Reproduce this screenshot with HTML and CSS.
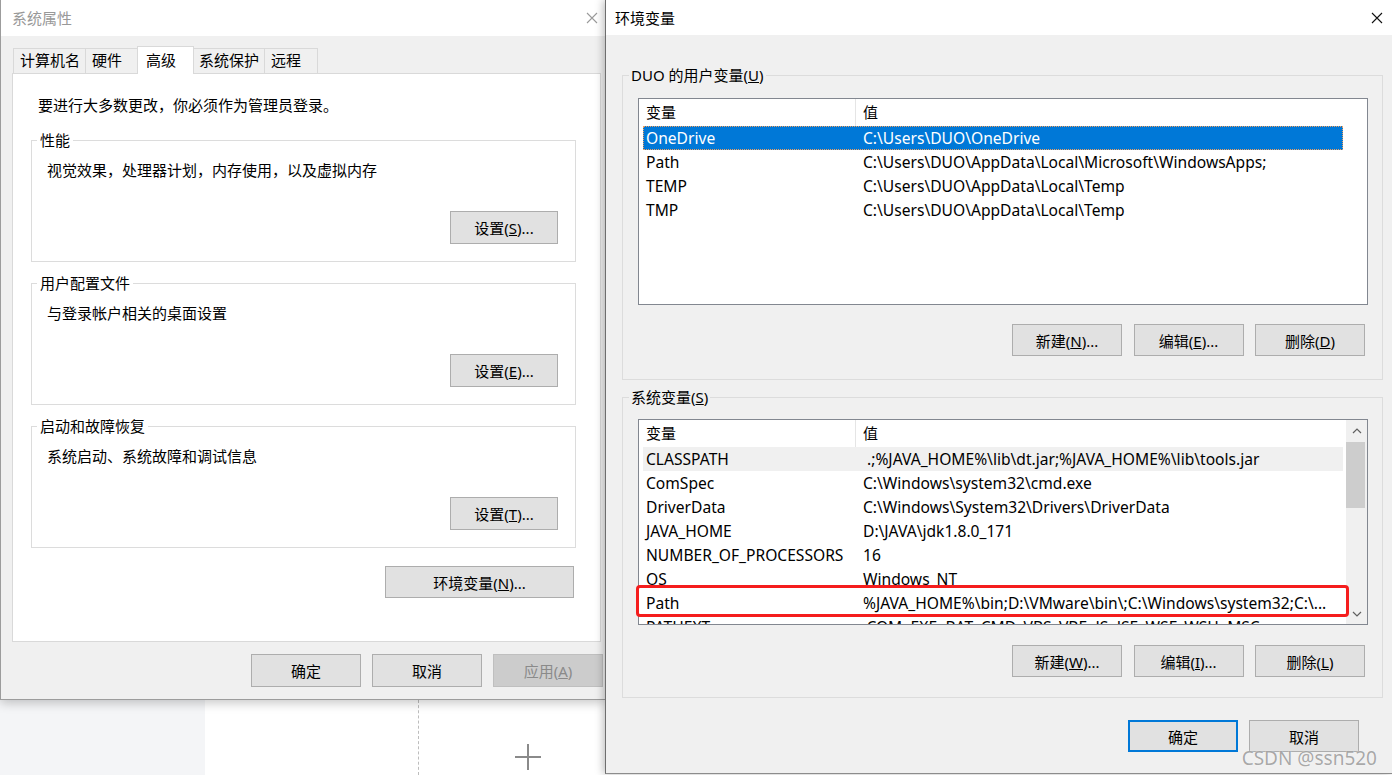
FILE: index.html
```html
<!DOCTYPE html>
<html lang="zh-CN">
<head>
    <meta charset="UTF-8">
    <meta name="viewport" content="width=device-width, initial-scale=1.0">
    <title>系统属性 - 环境变量</title>
    <link rel="stylesheet" href="styles.css">
</head>
<body>
    <div class="desktop">
        <div class="left-col">
            <!-- 系统属性 窗口 -->
            <div class="win sysprop">
                <div class="titlebar">
                    <span class="title inactive">系统属性</span>
                    <svg class="close" viewBox="0 0 12 12"><path d="M1 1L11 11M11 1L1 11" stroke="#9a9a9a" stroke-width="1.1" fill="none"/></svg>
                </div>
                <div class="win-body">
                    <div class="tabs">
                        <div class="tab">计算机名</div>
                        <div class="tab">硬件</div>
                        <div class="tab active">高级</div>
                        <div class="tab">系统保护</div>
                        <div class="tab">远程</div>
                    </div>
                    <div class="tab-panel">
                        <p class="note">要进行大多数更改，你必须作为管理员登录。</p>

                        <fieldset class="group">
                            <legend>性能</legend>
                            <div class="group-text">视觉效果，处理器计划，内存使用，以及虚拟内存</div>
                            <div class="group-actions"><button class="btn">设置(<u>S</u>)...</button></div>
                        </fieldset>

                        <fieldset class="group">
                            <legend>用户配置文件</legend>
                            <div class="group-text">与登录帐户相关的桌面设置</div>
                            <div class="group-actions"><button class="btn">设置(<u>E</u>)...</button></div>
                        </fieldset>

                        <fieldset class="group">
                            <legend>启动和故障恢复</legend>
                            <div class="group-text">系统启动、系统故障和调试信息</div>
                            <div class="group-actions"><button class="btn">设置(<u>T</u>)...</button></div>
                        </fieldset>

                        <div class="env-row"><button class="btn btn-wide">环境变量(<u>N</u>)...</button></div>
                    </div>
                    <div class="footer">
                        <button class="btn">确定</button>
                        <button class="btn">取消</button>
                        <button class="btn disabled">应用(<u>A</u>)</button>
                    </div>
                </div>
            </div>

            <!-- 窗口下面露出的页面 -->
            <div class="backdrop">
                <div class="bd-side"></div>
                <div class="bd-cell"></div>
                <div class="bd-cell add">
                    <svg viewBox="0 0 26 26"><path d="M13 0V26M0 13H26" stroke="#8a8a8a" stroke-width="2" fill="none"/></svg>
                </div>
            </div>
        </div>

        <!-- 环境变量 窗口 -->
        <div class="win envvars">
            <div class="titlebar">
                <span class="title">环境变量</span>
                <svg class="close" viewBox="0 0 12 12"><path d="M1 1L11 11M11 1L1 11" stroke="#111" stroke-width="1.1" fill="none"/></svg>
            </div>
            <div class="win-body env-body">
                <fieldset class="group env-group">
                    <legend>DUO 的用户变量(<u>U</u>)</legend>
                    <div class="listview user-list">
                        <div class="lv-rows">
                            <div class="lv-head"><span class="name">变量</span><span class="val">值</span></div>
                            <div class="lv-row selected"><span class="name">OneDrive</span><span class="val">C:\Users\DUO\OneDrive</span></div>
                            <div class="lv-row"><span class="name">Path</span><span class="val">C:\Users\DUO\AppData\Local\Microsoft\WindowsApps;</span></div>
                            <div class="lv-row"><span class="name">TEMP</span><span class="val">C:\Users\DUO\AppData\Local\Temp</span></div>
                            <div class="lv-row"><span class="name">TMP</span><span class="val">C:\Users\DUO\AppData\Local\Temp</span></div>
                        </div>
                    </div>
                    <div class="env-actions">
                        <button class="btn">新建(<u>N</u>)...</button>
                        <button class="btn">编辑(<u>E</u>)...</button>
                        <button class="btn">删除(<u>D</u>)</button>
                    </div>
                </fieldset>

                <fieldset class="group env-group sys">
                    <legend>系统变量(<u>S</u>)</legend>
                    <div class="lv-wrap">
                        <div class="listview sys-list">
                            <div class="lv-rows">
                                <div class="lv-head"><span class="name">变量</span><span class="val">值</span></div>
                                <div class="lv-row hot"><span class="name">CLASSPATH</span><span class="val">&nbsp;.;%JAVA_HOME%\lib\dt.jar;%JAVA_HOME%\lib\tools.jar</span></div>
                                <div class="lv-row"><span class="name">ComSpec</span><span class="val">C:\Windows\system32\cmd.exe</span></div>
                                <div class="lv-row"><span class="name">DriverData</span><span class="val">C:\Windows\System32\Drivers\DriverData</span></div>
                                <div class="lv-row"><span class="name">JAVA_HOME</span><span class="val">D:\JAVA\jdk1.8.0_171</span></div>
                                <div class="lv-row"><span class="name">NUMBER_OF_PROCESSORS</span><span class="val">16</span></div>
                                <div class="lv-row"><span class="name">OS</span><span class="val">Windows_NT</span></div>
                                <div class="lv-row"><span class="name">Path</span><span class="val">%JAVA_HOME%\bin;D:\VMware\bin\;C:\Windows\system32;C:\...</span></div>
                                <div class="lv-row"><span class="name">PATHEXT</span><span class="val">.COM;.EXE;.BAT;.CMD;.VBS;.VBE;.JS;.JSE;.WSF;.WSH;.MSC</span></div>
                            </div>
                            <div class="scrollbar">
                                <div class="sb-btn"><svg viewBox="0 0 10 6"><path d="M1 5L5 1L9 5" stroke="#606060" stroke-width="1.2" fill="none"/></svg></div>
                                <div class="sb-track"><div class="sb-thumb"></div></div>
                                <div class="sb-btn"><svg viewBox="0 0 10 6"><path d="M1 1L5 5L9 1" stroke="#606060" stroke-width="1.2" fill="none"/></svg></div>
                            </div>
                        </div>
                        <div class="mark"></div>
                    </div>
                    <div class="env-actions">
                        <button class="btn">新建(<u>W</u>)...</button>
                        <button class="btn">编辑(<u>I</u>)...</button>
                        <button class="btn">删除(<u>L</u>)</button>
                    </div>
                </fieldset>

                <div class="footer env-footer">
                    <button class="btn default">确定</button>
                    <button class="btn">取消</button>
                </div>
            </div>
            <div class="watermark">CSDN @ssn520</div>
        </div>
    </div>
</body>
</html>
```

FILE: styles.css
```css
* {
    box-sizing: border-box;
}

body {
    margin: 0;
    width: 1392px;
    height: 775px;
    overflow: hidden;
    font-family: "Noto Sans", "Noto Sans CJK SC", sans-serif;
    font-size: 15px;
    color: #000;
    background: #fff;
}

.desktop {
    display: flex;
    height: 775px;
}

.left-col {
    width: 605px;
    flex: none;
    display: flex;
    flex-direction: column;
}

/* 窗口通用 */
.win {
    background: #f0f0f0;
    display: flex;
    flex-direction: column;
}

.titlebar {
    flex: none;
    height: 36px;
    background: #fff;
    display: flex;
    align-items: center;
    justify-content: space-between;
    padding: 0 7px 0 11px;
}

.title {
    line-height: 20px;
}

.title.inactive {
    color: #999;
}

.close {
    width: 12px;
    height: 12px;
}

.btn {
    width: 108px;
    height: 33px;
    padding: 0;
    border: 1px solid #adadad;
    background: #e1e1e1;
    font-family: inherit;
    font-size: 15px;
    color: #000;
}

.btn.disabled {
    background: #cccccc;
    border-color: #bfbfbf;
    color: #8a8a8a;
}

.btn.default {
    border: 2px solid #0078d7;
}

/* 分组框 */
.group {
    margin: 0;
    border: 1px solid #dcdcdc;
    min-width: 0;
}

.group legend {
    padding: 0 3px;
    margin-left: -10px;
    line-height: 20px;
}

/* 系统属性 */
.sysprop {
    height: 700px;
    border-left: 1px solid #9c9c9c;
    border-bottom: 1px solid #9c9c9c;
    box-shadow: 0 3px 10px rgba(0, 0, 0, 0.22);
    position: relative;
    z-index: 1;
}

.sysprop .win-body {
    flex: 1;
    padding: 10px 0 0 11px;
}

.tabs {
    display: flex;
    align-items: flex-end;
    height: 28px;
    padding-left: 1px;
    margin-bottom: -1px;
    position: relative;
    z-index: 1;
}

.tab {
    height: 25px;
    line-height: 23px;
    min-width: 54px;
    padding: 0 5px 0 6px;
    margin: 0 -1px 1px 0;
    border: 1px solid #d9d9d9;
    border-bottom: none;
    background: #f0f0f0;
}

.tab.active {
    height: 28px;
    line-height: 26px;
    min-width: 57px;
    margin: 0 -2px 0 -1px;
    padding: 0 8px;
    background: #fff;
    position: relative;
    z-index: 1;
}

.tab-panel {
    width: 589px;
    height: 569px;
    background: #fff;
    border: 1px solid #d9d9d9;
    padding: 21px 24px 0 18px;
}

.note {
    margin: 0 0 15px;
    padding-left: 7px;
    line-height: 20px;
}

.tab-panel .group {
    padding: 10px 17px 17px 15px;
}

.tab-panel .group + .group {
    margin-top: 11px;
}

.group-text {
    line-height: 20px;
}

.group-actions {
    display: flex;
    justify-content: flex-end;
    margin-top: 31px;
}

.env-row {
    display: flex;
    justify-content: flex-end;
    margin-top: 18px;
    padding-right: 2px;
}

.btn-wide {
    width: 189px;
    height: 32px;
}

.footer {
    display: flex;
    justify-content: flex-end;
    gap: 11px;
    padding: 12px 2px 0 0;
}

.footer .btn {
    width: 110px;
}

/* 下方露出的页面 */
.backdrop {
    flex: 1;
    display: flex;
}

.bd-side {
    width: 205px;
    background: #f4f5f7;
}

.bd-cell {
    width: 214px;
    border-right: 1px dashed #bdbdbd;
}

.bd-cell.add {
    flex: 1;
    border-right: none;
    padding: 44px 0 0 96px;
}

.bd-cell.add svg {
    width: 26px;
    height: 26px;
    display: block;
}

/* 环境变量 */
.envvars {
    flex: 1;
    height: 774px;
    border-left: 1px solid #6e6e6e;
    border-bottom: 1px solid #8c8c8c;
    box-shadow: -2px 0 8px rgba(0, 0, 0, 0.25);
    position: relative;
    z-index: 2;
}

.envvars .titlebar {
    height: 35px;
    padding: 0 9px 0 9px;
}

.env-body {
    padding: 30px 9px 0 16px;
}

.env-group {
    padding: 13px 14px 23px 15px;
}

.env-group legend {
    padding: 0 2px;
    margin-left: -9px;
}

.env-group.sys {
    margin-top: 7px;
    padding: 12px 14px 20px 15px;
}

.listview {
    display: flex;
    height: 207px;
    background: #fff;
    border: 1px solid #828790;
    overflow: hidden;
}

.sys-list {
    height: 206px;
}

.lv-rows {
    flex: 1;
    padding-left: 4px;
    overflow: hidden;
}

.lv-head,
.lv-row {
    display: flex;
    width: 700px;
    white-space: nowrap;
}

.lv-head {
    height: 27px;
    line-height: 27px;
}

.lv-row {
    height: 24px;
    line-height: 24px;
    font-size: 15.6px;
}

.lv-head .name,
.lv-row .name {
    width: 213px;
    flex: none;
    padding-left: 3px;
}

.lv-head .name {
    border-right: 1px solid #e5e5e5;
}

.lv-head .val {
    padding-left: 7px;
}

.lv-row .val {
    padding-left: 7px;
}

.lv-row.selected {
    background: #0078d7;
    color: #fff;
    outline: 1px dotted #f0a060;
    outline-offset: -1px;
}

.lv-row.hot {
    background: #f0f0f0;
}

.scrollbar {
    width: 21px;
    flex: none;
    background: #f0f0f0;
    display: flex;
    flex-direction: column;
}

.sb-btn {
    height: 21px;
    display: flex;
    align-items: center;
    justify-content: center;
}

.sb-btn svg {
    width: 10px;
    height: 6px;
}

.sb-track {
    flex: 1;
}

.sb-thumb {
    height: 66px;
    margin: 1px 2px 0 0;
    background: #cdcdcd;
}

.lv-wrap {
    position: relative;
}

.mark {
    position: absolute;
    left: -2px;
    top: 166px;
    width: 713px;
    height: 32px;
    border: 3px solid #f51d1d;
    border-radius: 4px;
}

.env-actions {
    display: flex;
    justify-content: flex-end;
    gap: 11.5px;
    margin-top: 19px;
    padding-right: 3px;
}

.sys .env-actions {
    margin-top: 20px;
}

.env-actions .btn,
.env-footer .btn {
    width: 110px;
    height: 32px;
}

.env-footer {
    padding: 22px 24px 0 0;
}

.watermark {
    position: absolute;
    right: 15px;
    bottom: 3px;
    font-size: 19px;
    line-height: 24px;
    color: rgba(130, 130, 130, 0.7);
    text-shadow: 0 0 1px #fff;
}
```
